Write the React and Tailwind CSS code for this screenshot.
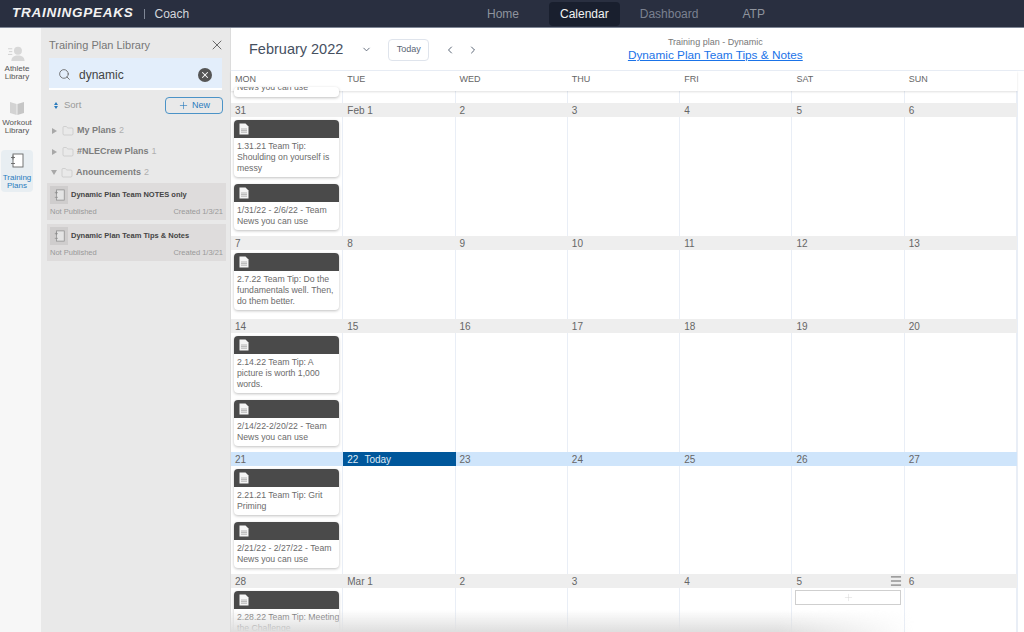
import React from "react";
import { ChevronDown, ChevronLeft, ChevronRight, Search, X, Plus, Folder, Menu } from "lucide-react";

const columns = ["MON", "TUE", "WED", "THU", "FRI", "SAT", "SUN"];

const weeks = [
  {
    height: 119,
    days: ["31", "Feb 1", "2", "3", "4", "5", "6"],
    cards: ["1.31.21 Team Tip:\nShoulding on yourself is\nmessy", "1/31/22 - 2/6/22 - Team\nNews you can use"],
  },
  {
    height: 69,
    days: ["7", "8", "9", "10", "11", "12", "13"],
    cards: ["2.7.22 Team Tip: Do the\nfundamentals well. Then,\ndo them better."],
  },
  {
    height: 119,
    days: ["14", "15", "16", "17", "18", "19", "20"],
    cards: ["2.14.22 Team Tip: A\npicture is worth 1,000\nwords.", "2/14/22-2/20/22 - Team\nNews you can use"],
  },
  {
    height: 108,
    current: true,
    days: ["21", "22", "23", "24", "25", "26", "27"],
    cards: ["2.21.21 Team Tip: Grit\nPriming", "2/21/22 - 2/27/22 - Team\nNews you can use"],
  },
  {
    height: 60,
    days: ["28", "Mar 1", "2", "3", "4", "5", "6"],
    cards: ["2.28.22 Team Tip: Meeting\nthe Challenge"],
    last: true,
  },
];

function DocIcon() {
  return (
    <svg width="10" height="12" viewBox="0 0 10 12" className="block">
      <path d="M0.5 0.5H6.5L9.5 3.5V11.5H0.5Z" fill="#f4f4f4" />
      <path d="M2 6H8M2 7.6H8M2 9.2H8" stroke="#8a8a8a" strokeWidth="0.6" />
    </svg>
  );
}

function PlanIcon({ size = 14, fill = "#fff", stroke = "#666" }) {
  return (
    <svg width={size} height={size + 1} viewBox="0 0 14 15" className="block">
      <rect x="3" y="1" width="10" height="13" fill={fill} stroke={stroke} strokeWidth="0.9" />
      <path d="M1 4.5H5M3 2.5V6.5M1 10.5H5" stroke={stroke} strokeWidth="0.9" />
    </svg>
  );
}

function NoteCard({ text }) {
  return (
    <div className="w-[105px] bg-white rounded-sm shadow-[0_1px_3px_rgba(0,0,0,0.25)] overflow-hidden shrink-0">
      <div className="h-[18px] bg-[#4a4a4a] flex items-center pl-[5px]">
        <DocIcon />
      </div>
      <div className="pl-[3px] py-[3px] text-[8.7px] leading-[11px] text-[#6b6b6b] whitespace-pre">{text}</div>
    </div>
  );
}

function WeekRow({ week }) {
  const headBg = week.current ? "bg-[#cfe5fb]" : "bg-[#eeeeee]";
  return (
    <div>
      <div className={`grid grid-cols-7 grid-rows-[14px] h-[14px] ${headBg}`}>
        {week.days.map((day, i) => {
          const today = week.current && i === 1;
          return (
            <div
              key={i}
              className={`relative pl-[4px] pt-[1px] text-[10px] leading-[14px] ${today ? "bg-[#00579b] text-[#dfeaf5]" : "text-[#666]"}`}
            >
              {day}
              {today && <span className="ml-[6px]">Today</span>}
              {week.last && i === 5 && (
                <Menu className="absolute right-[2px] top-0 w-[14px] h-[14px] text-[#555]" strokeWidth={1.5} />
              )}
            </div>
          );
        })}
      </div>
      <div className="grid grid-cols-7" style={{ height: week.height }}>
        {week.days.map((day, i) => (
          <div key={i} className="border-r border-[#e9eef6] overflow-hidden">
            {i === 0 && (
              <div className="flex flex-col gap-[7px] pt-[3px] pl-[3px]">
                {week.cards.map((c) => (
                  <NoteCard key={c} text={c} />
                ))}
              </div>
            )}
            {week.last && i === 5 && (
              <div className="mt-[2px] mx-[3px] h-[15px] border border-[#cfcfcf] flex items-center justify-center">
                <Plus className="w-[11px] h-[11px] text-[#d4d4d4]" strokeWidth={1} />
              </div>
            )}
          </div>
        ))}
      </div>
    </div>
  );
}

function RailItem({ label, className, labelClass, children }) {
  return (
    <div className={`w-[32px] h-[42px] flex flex-col items-center rounded ${className}`}>
      {children}
      <div className={`text-[8px] leading-[8px] text-center ${labelClass}`}>{label}</div>
    </div>
  );
}

function TreeRow({ open, name, count }) {
  return (
    <div className="flex items-center h-[21px] pl-[10px] text-[9px]">
      <span className={`w-0 h-0 ${open
        ? "border-x-[3.5px] border-x-transparent border-t-[5px] border-t-[#a8a8a8]"
        : "border-y-[3.5px] border-y-transparent border-l-[5px] border-l-[#a8a8a8] ml-[1px] mr-[1px]"}`} />
      <Folder className="w-[12px] h-[12px] ml-[4px] text-[#b5b5b5]" strokeWidth={1} />
      <span className="ml-[3px] font-bold text-[#7d7d7d]">{name}</span>
      <span className="ml-[3px] text-[#b0b0b0]">{count}</span>
    </div>
  );
}

function PlanCard({ name }) {
  return (
    <div className="h-[37px] bg-[#dedcdc] px-[3px] pt-[3px]">
      <div className="flex items-center h-[18px]">
        <div className="w-[18px] h-[18px] bg-[#cfcdcd] flex items-center justify-center">
          <PlanIcon size={11} fill="#e4e4e4" stroke="#8a8a8a" />
        </div>
        <div className="ml-[3px] text-[7.5px] font-bold text-[#444]">{name}</div>
      </div>
      <div className="flex justify-between mt-[3px] text-[7.5px] leading-[10px] text-[#999]">
        <span>Not Published</span>
        <span>Created 1/3/21</span>
      </div>
    </div>
  );
}

export default function App() {
  return (
    <div className="w-[1024px] h-[632px] overflow-hidden flex flex-col bg-white font-['Liberation_Sans',Arial,sans-serif]">
      <header className="h-[28px] shrink-0 bg-[#292f40] border-b border-[#7f8796] flex items-center">
        <div className="w-[400px] flex items-center pl-[12px]">
          <span className="text-[13.5px] font-bold italic tracking-[0.75px] text-[#f2f2f2]">TRAININGPEAKS</span>
          <span className="ml-[10px] h-[10px] border-l border-[#7f8796]" />
          <span className="ml-[10px] text-[12px] text-[#d4d7dc]">Coach</span>
        </div>
        <nav className="flex items-center text-[12px]">
          <span className="ml-[87px] text-[#8f949e]">Home</span>
          <span className="ml-[30px] px-[11px] h-[24px] leading-[24px] rounded bg-[#191f2e] text-[#f2f2f2]">Calendar</span>
          <span className="ml-[20px] text-[#7b8190]">Dashboard</span>
          <span className="ml-[44px] text-[#8f949e]">ATP</span>
        </nav>
      </header>

      <div className="flex-1 flex min-h-0">
        <aside className="w-[41px] shrink-0 bg-[#f7f7f7] flex flex-col pl-px pt-[17px]">
          <RailItem label={<>Athlete<br />Library</>} labelClass="mt-[3px] text-[#555]">
            <svg width="20" height="17" viewBox="0 0 20 18" className="block">
              <circle cx="11" cy="6" r="4.2" fill="#d8d8d8" />
              <path d="M4 17C4 12.5 7 11 11 11S18 12.5 18 17Z" fill="#d8d8d8" />
              <path d="M0.5 4H5M1.5 7H5M0.5 10H5" stroke="#d0d0d0" />
            </svg>
          </RailItem>
          <RailItem className="mt-[13px]" label={<>Workout<br />Library</>} labelClass="mt-[3px] text-[#555]">
            <svg width="16" height="16" viewBox="0 0 16 16" className="block">
              <path d="M1 2L7.6 4V15L1 13Z" fill="#d3d3d3" />
              <path d="M15 2L8.4 4V15L15 13Z" fill="#c6c6c6" />
            </svg>
          </RailItem>
          <RailItem className="mt-[8px] bg-[#e8eef2] pt-[3px]" label={<>Training<br />Plans</>} labelClass="mt-[6px] text-[#2b7bbd]">
            <PlanIcon />
          </RailItem>
        </aside>

        <section className="w-[190px] shrink-0 bg-[#e9e9e9] border-r border-[#dcdcdc]">
          <div className="h-[30px] pt-[4px] flex items-center justify-between pl-[8px] pr-[5px]">
            <span className="text-[11px] text-[#777]">Training Plan Library</span>
            <X className="w-[16px] h-[16px] text-[#555]" strokeWidth={1.3} />
          </div>
          <div className="mx-[8px] h-[32px] pt-[3px] bg-[#e3eefb] border-b-2 border-white flex items-center pl-[9px] pr-[10px]">
            <Search className="w-[13px] h-[13px] text-[#666]" strokeWidth={1.6} />
            <span className="ml-[8px] text-[12px] text-[#444]">dynamic</span>
            <span className="ml-auto w-[14px] h-[14px] rounded-full bg-[#555] flex items-center justify-center">
              <X className="w-[10px] h-[10px] text-white" strokeWidth={2.5} />
            </span>
          </div>
          <div className="mt-[7px] h-[17px] flex items-center justify-between pl-[13px] pr-[7px]">
            <div className="flex items-center text-[9.5px] text-[#999]">
              <span className="flex flex-col gap-px">
                <span className="w-0 h-0 border-x-[2.5px] border-x-transparent border-b-[3.5px] border-b-[#2b7bbd]" />
                <span className="w-0 h-0 border-x-[2.5px] border-x-transparent border-t-[3.5px] border-t-[#2b7bbd]" />
              </span>
              <span className="ml-[6px]">Sort</span>
            </div>
            <div className="w-[58px] h-[17px] border border-[#4b93c7] rounded-sm flex items-center justify-center text-[9px] text-[#2b7bbd]">
              <Plus className="w-[11px] h-[11px] mr-[3px]" strokeWidth={1.4} />
              New
            </div>
          </div>
          <div className="mt-[6px]">
            <TreeRow name="My Plans" count="2" />
            <TreeRow name="#NLECrew Plans" count="1" />
            <TreeRow open name="Anouncements" count="2" />
          </div>
          <div className="ml-[6px] mr-[4px] flex flex-col gap-[4px]">
            <PlanCard name="Dynamic Plan Team NOTES only" />
            <PlanCard name="Dynamic Plan Team Tips & Notes" />
          </div>
        </section>

        <main className="relative flex-1 min-w-0 flex flex-col">
          <div className="h-[43px] pt-[1px] shrink-0 flex items-center border-b border-[#e9eef6] pl-[18px]">
            <span className="text-[14.5px] text-[#46505f]">February 2022</span>
            <ChevronDown className="ml-[18px] w-[11px] h-[11px] text-[#5a6575]" strokeWidth={2} />
            <div className="ml-[16px] w-[41px] h-[22px] border border-[#dfe4ec] rounded-sm flex items-center justify-center text-[9px] text-[#5a6575]">
              Today
            </div>
            <ChevronLeft className="ml-[15px] w-[12px] h-[12px] text-[#5a6575]" strokeWidth={2} />
            <ChevronRight className="ml-[11px] w-[12px] h-[12px] text-[#5a6575]" strokeWidth={2} />
            <div className="ml-[146px] w-[180px] text-center">
              <div className="text-[9px] leading-[11px] text-[#777]">Training plan - Dynamic</div>
              <div className="text-[11.8px] leading-[14px] text-[#1a73e8] underline whitespace-nowrap">Dynamic Plan Team Tips &amp; Notes</div>
            </div>
          </div>

          <div className="w-[786px] grid grid-cols-7 h-[20px] shrink-0 shadow-[0_1px_2px_rgba(0,0,0,0.12)] z-10 bg-white">
            {columns.map((c) => (
              <div key={c} className="pl-[4px] text-[9px] leading-[16px] text-[#666]">{c}</div>
            ))}
          </div>

          <div className="flex-1 min-h-0 w-[786px] border-r border-[#e9eef6] box-content">
            <div className="grid grid-cols-7 h-[12px]">
              {columns.map((c, i) => (
                <div key={c} className="border-r border-[#e9eef6]">
                  {i === 0 && (
                    <div className="relative z-20 -mt-[4px] ml-[3px] w-[105px] h-[10px] bg-white shadow-[0_1px_3px_rgba(0,0,0,0.25)] rounded-sm pl-[3px] text-[8.7px] leading-[11px] overflow-hidden text-[#6b6b6b]">
                      <div className="-mt-[5px]">News you can use</div>
                    </div>
                  )}
                </div>
              ))}
            </div>
            {weeks.map((w) => (
              <WeekRow key={w.days[0]} week={w} />
            ))}
          </div>

          <div className="absolute z-30 left-0 right-[110px] bottom-0 h-[22px] bg-gradient-to-t from-[#dedede] to-transparent pointer-events-none [mask-image:linear-gradient(to_right,black_80%,transparent)]" />
        </main>
      </div>
    </div>
  );
}
